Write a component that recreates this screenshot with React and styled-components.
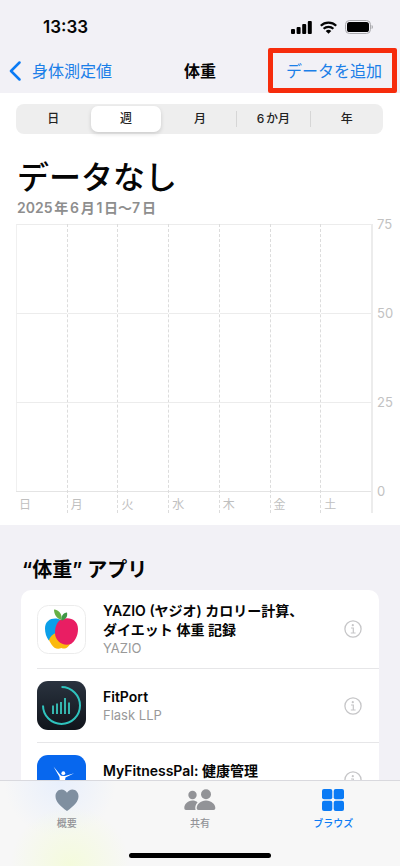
import React, { useState } from 'react'
import styled, { createGlobalStyle } from 'styled-components'

const GlobalStyle = createGlobalStyle`
    * {
        box-sizing: border-box;
    }
    body {
        margin: 0;
        background: #f2f1f6;
        color: #050505;
        font-family: Inter, 'Noto Sans CJK JP', sans-serif;
    }
    button {
        font-family: inherit;
        background: none;
        border: 0;
        padding: 0;
        cursor: pointer;
    }
    svg {
        display: block;
    }
`

const Screen = styled.div`
    height: 100vh;
    display: flex;
    flex-direction: column;
`

const StatusBar = styled.div`
    flex: none;
    height: 48px;
    display: flex;
    justify-content: space-between;
    align-items: center;
    padding: 6px 27px 0 43px;
`

const Clock = styled.time`
    font-size: 17px;
    font-weight: 600;
    line-height: 20px;
`

const StatusIcons = styled.div`
    display: flex;
    align-items: center;
    gap: 8px;
`

const NavBar = styled.header`
    flex: none;
    height: 45px;
    display: grid;
    grid-template-columns: 1fr auto 1fr;
    align-items: center;
    padding: 0 3px;
`

const BackLink = styled.a`
    display: flex;
    align-items: center;
    gap: 9px;
    padding-left: 5px;
    color: #1b7fe8;
    font-size: 16px;
    line-height: 20px;
    text-decoration: none;
`

const NavTitle = styled.h1`
    margin: 0;
    font-size: 16px;
    font-weight: 700;
    line-height: 20px;
`

const AddButton = styled.button`
    && {
        justify-self: end;
        height: 45px;
        padding: 0 10px 0 13px;
        border: 5px solid #f62c0c;
        border-radius: 2px;
    }
    color: #1b7fe8;
    font-size: 16px;
    line-height: 20px;
    white-space: nowrap;
`

const Content = styled.main`
    flex: 1;
    min-height: 0;
    overflow-y: auto;
    scrollbar-width: none;
`

const Panel = styled.section`
    background: #fff;
    padding: 11px 0 12px 16px;
`

const Segments = styled.div`
    height: 30px;
    margin-right: 17px;
    padding: 2px 0;
    display: grid;
    grid-template-columns: repeat(5, 1fr);
    background: #eee;
    border-radius: 8px;
`

const Segment = styled.button`
    && {
        border-left: 1px solid ${({ $divided }) => ($divided ? '#d6d6d6' : 'transparent')};
        margin: 5px 0;
    }
    color: #222;
    font-size: 12px;
    font-weight: 500;
    line-height: 16px;
    text-autospace: normal;
    &&[aria-pressed='true'] {
        margin: 0 2px;
        border: 0;
        background: #fff;
        border-radius: 7px;
        box-shadow: 0 2px 4px rgba(0, 0, 0, 0.14);
    }
`

const Summary = styled.div`
    padding: 24px 0 6px 1px;
`

const Headline = styled.h2`
    margin: 0;
    font-size: 32px;
    font-weight: 500;
    line-height: 40px;
`

const Period = styled.p`
    margin: 0;
    color: #8e8e8e;
    font-size: 14px;
    font-weight: 600;
    line-height: 20px;
    text-autospace: normal;
`

const Chart = styled.div`
    display: flex;
`

const Plot = styled.div`
    flex: 1;
    display: grid;
    grid-template-columns: repeat(7, 1fr);
    border-right: 2px solid #ececec;
`

const Band = styled.div`
    height: 89px;
    border-top: 1px solid #ececec;
`

const Day = styled.div`
    border-left: 1px dashed #dcdcdc;
    &:first-child {
        border-left: 0;
    }
    &:first-child ${Band} {
        border-left: 1px solid #f0f0f0;
    }
`

const DayLabel = styled.div`
    border-top: 1px solid #e4e4e4;
    padding: 5px 0 0 3px;
    color: #bfbfbf;
    font-size: 12px;
    line-height: 16px;
`

const Axis = styled.div`
    width: 27px;
    margin-top: -8px;
    padding-left: 4px;
`

const AxisLabel = styled.div`
    height: 89px;
    color: #c2c2c2;
    font-size: 13px;
    line-height: 16px;
    &:last-child {
        height: 16px;
    }
`

const AppsSection = styled.section`
    padding: 32px 21px 0;
`

const SectionTitle = styled.h2`
    margin: 0 0 7px 1px;
    font-size: 20px;
    font-weight: 600;
    line-height: 26px;
`

const AppList = styled.ul`
    list-style: none;
    margin: 0;
    padding: 0 0 0 16px;
    background: #fff;
    border-radius: 10px;
`

const AppRow = styled.li`
    min-height: 74px;
    display: flex;
    align-items: center;
    gap: 17px;
    padding: 11px 17px 11px 0;
    & + & {
        border-top: 1px solid #e6e6e8;
    }
`

const AppText = styled.div`
    flex: 1;
    min-height: 37px;
`

const AppName = styled.div`
    font-size: 14px;
    font-weight: 600;
    line-height: 19px;
    white-space: pre-line;
`

const Vendor = styled.div`
    color: #999;
    font-size: 13px;
    line-height: 18px;
`

const TabBar = styled.nav`
    flex: none;
    border-top: 1px solid #d9d9de;
    background:
        radial-gradient(circle at 70px 85px, #f4fbdc, transparent 60px),
        radial-gradient(circle at 60px 0, #e8effc, transparent 56px),
        #f7f7f7;
`

const Tabs = styled.div`
    display: grid;
    grid-template-columns: repeat(3, 1fr);
    height: 72px;
    padding-top: 7px;
`

const Tab = styled.button`
    display: flex;
    flex-direction: column;
    align-items: center;
    gap: 4px;
    height: 46px;
    color: ${({ $active }) => ($active ? '#0b7bf5' : '#929397')};
    font-size: 10px;
    font-weight: 500;
    line-height: 14px;
`

const HomeIndicator = styled.div`
    width: 142px;
    height: 5px;
    margin: 0 auto 8px;
    border-radius: 3px;
    background: #000;
`

const SignalIcon = () => (
    <svg width="21" height="13" viewBox="0 0 21 13">
        <rect x="0" y="8" width="4" height="5" rx="1" />
        <rect x="5.6" y="6" width="4" height="7" rx="1" />
        <rect x="11.2" y="3" width="4" height="10" rx="1" />
        <rect x="16.8" y="0" width="4" height="13" rx="1" />
    </svg>
)

const WifiIcon = () => (
    <svg width="17" height="13" viewBox="0 0 17 13">
        <g fill="none" stroke="#050505" strokeWidth="2.2">
            <path d="M.8 4.8a11 11 0 0 1 15.4 0" />
            <path d="M3.6 7.8a7 7 0 0 1 9.8 0" />
        </g>
        <path d="M8.5 12.8 5.7 10a4 4 0 0 1 5.6 0z" />
    </svg>
)

const BatteryIcon = () => (
    <svg width="28" height="14" viewBox="0 0 28 14">
        <rect x=".5" y=".5" width="25" height="13" rx="4" fill="none" stroke="#a9a9ad" />
        <rect x="2" y="2" width="22" height="10" rx="2.6" />
        <path d="M26.6 5v4c.9-.3 1.3-1 1.3-2s-.4-1.7-1.3-2z" fill="#a9a9ad" />
    </svg>
)

const BackIcon = () => (
    <svg width="15" height="20" viewBox="0 0 15 20">
        <path
            d="M11.5 1.5 3 10l8.5 8.5"
            fill="none"
            stroke="#0b7bf5"
            strokeWidth="2.5"
            strokeLinecap="round"
            strokeLinejoin="round"
        />
    </svg>
)

const InfoIcon = () => (
    <svg width="18" height="18" viewBox="0 0 18 18">
        <circle cx="9" cy="9" r="8.1" fill="none" stroke="#c6c6c8" strokeWidth="1.3" />
        <circle cx="8.8" cy="5.2" r="1.1" fill="#c6c6c8" />
        <path d="M7 8h2.3v4.8M6.8 13h4.8" fill="none" stroke="#c6c6c8" strokeWidth="1.2" />
    </svg>
)

const YazioLogo = () => (
    <svg width="49" height="49" viewBox="0 0 49 49">
        <rect x=".5" y=".5" width="48" height="48" rx="11" fill="#fff" stroke="#ececec" />
        <path
            d="M11.5 34 18 25l16 12c-2.5 6-6 7.5-9.5 6-4 1.5-7.5.5-10-3.5-1.2-1.7-2.2-3.5-3-5.5z"
            fill="#fbb90f"
        />
        <path
            d="M24.5 15C18 11.5 8 13.5 8 23.5c0 4.5 1.3 8.5 3.8 12C13 31.5 16 29 20 27.5z"
            fill="#0c9fe8"
        />
        <path
            d="M18 28c0-7 2.5-12.5 7.5-14C33 11.5 41 15 41 24c0 7-3 12-7 15-8 3-16-3-16-11z"
            fill="#e91e63"
        />
        <path d="M24.5 15C19.5 13.5 17 9.5 17 4.5c5 .5 8.5 4.5 7.5 10.5z" fill="#67b044" />
        <path d="M24.5 15.5c-.5-4.500 1.500-7.500 5.500-8 1 4-1.500 7.500-5.500 8z" fill="#3f9747" />
    </svg>
)

const FitPortLogo = () => (
    <svg width="49" height="49" viewBox="0 0 49 49">
        <defs>
            <linearGradient id="fitport" x1="0" y1="0" x2="0" y2="1">
                <stop offset="0" stopColor="#2a333f" />
                <stop offset="1" stopColor="#10141b" />
            </linearGradient>
        </defs>
        <rect width="49" height="49" rx="11" fill="url(#fitport)" />
        <path
            d="M24.5 6A18.5 18.5 0 1 1 6 24.5"
            fill="none"
            stroke="#2fc3bd"
            strokeWidth="2"
        />
        <path
            d="M16 24.5V33M20 22.5V33M24 21v12M28 17v16M32 21.5V33"
            fill="none"
            stroke="#35b5ae"
            strokeWidth="2"
        />
    </svg>
)

const MyFitnessPalLogo = () => (
    <svg width="49" height="49" viewBox="0 0 49 49">
        <rect width="49" height="49" rx="11" fill="#0767ee" />
        <circle cx="26.3" cy="18.2" r="1.9" fill="#fff" />
        <path
            d="M16.5 11.5 24 20.7l4 .2 9.2-2.7-8.700 4.300-1 5.500 3.500 14-5.500-11-6 11 3.300-15-.3-5z"
            fill="#fff"
        />
    </svg>
)

const HeartIcon = () => (
    <svg width="24" height="24" viewBox="0 0 24 24">
        <path
            d="M12 23C5 18 .5 13.5.5 8.2.5 4.4 3.2 1.5 6.6 1.5c2.3 0 4.3 1.3 5.4 3.3 1.1-2 3.1-3.3 5.4-3.3 3.4 0 6.1 2.9 6.1 6.7C23.5 13.5 19 18 12 23z"
            fill="#7f8fa0"
        />
    </svg>
)

const PeopleIcon = () => (
    <svg width="32" height="24" viewBox="0 0 32 24" fill="#929397">
        <circle cx="8.5" cy="7" r="4.2" />
        <path d="M13.6 14.2C12.2 13.1 10.5 12.6 8.5 12.6 3.5 12.6.3 16.5.3 20c0 1.3.6 2 1.7 2h9.6c-1-2.5 0-5.5 2-7.8z" />
        <circle cx="22" cy="6.3" r="5" />
        <path d="M22 12.5c-5.5 0-9.3 4-9.3 7.5 0 1.3.6 2 1.8 2h15c1.2 0 1.8-.7 1.8-2 0-3.5-3.8-7.5-9.3-7.5z" />
    </svg>
)

const BrowseIcon = () => (
    <svg width="24" height="24" viewBox="0 0 24 24" fill="#0b7bf5">
        <rect x="1" y="1" width="10.3" height="10.3" rx="2" />
        <rect x="12.7" y="1" width="10.3" height="10.3" rx="2" />
        <rect x="1" y="12.7" width="10.3" height="10.3" rx="2" />
        <rect x="12.7" y="12.7" width="10.3" height="10.3" rx="2" />
    </svg>
)

const ranges = ['日', '週', '月', '6か月', '年']
const days = ['日', '月', '火', '水', '木', '金', '土']
const ticks = [75, 50, 25, 0]

const apps = [
    {
        name: 'YAZIO (ヤジオ) カロリー計算、\nダイエット 体重 記録',
        vendor: 'YAZIO',
        Logo: YazioLogo,
    },
    { name: 'FitPort', vendor: 'Flask LLP', Logo: FitPortLogo },
    { name: 'MyFitnessPal: 健康管理', Logo: MyFitnessPalLogo },
]

const tabs = [
    { label: '概要', Icon: HeartIcon },
    { label: '共有', Icon: PeopleIcon },
    { label: 'ブラウズ', Icon: BrowseIcon, active: true },
]

const WeightChart = () => (
    <Chart>
        <Plot>
            {days.map((day) => (
                <Day key={day}>
                    <Band />
                    <Band />
                    <Band />
                    <DayLabel>{day}</DayLabel>
                </Day>
            ))}
        </Plot>
        <Axis>
            {ticks.map((tick) => (
                <AxisLabel key={tick}>{tick}</AxisLabel>
            ))}
        </Axis>
    </Chart>
)

const App = () => {
    const [range, setRange] = useState(1)

    return (
        <Screen lang="ja">
            <GlobalStyle />
            <StatusBar>
                <Clock>13:33</Clock>
                <StatusIcons>
                    <SignalIcon />
                    <WifiIcon />
                    <BatteryIcon />
                </StatusIcons>
            </StatusBar>
            <NavBar>
                <BackLink href="#measurements">
                    <BackIcon />
                    身体測定値
                </BackLink>
                <NavTitle>体重</NavTitle>
                <AddButton type="button">データを追加</AddButton>
            </NavBar>
            <Content>
                <Panel>
                    <Segments>
                        {ranges.map((label, i) => (
                            <Segment
                                key={label}
                                type="button"
                                aria-pressed={i === range}
                                $divided={i > 0 && i !== range + 1}
                                onClick={() => setRange(i)}
                            >
                                {label}
                            </Segment>
                        ))}
                    </Segments>
                    <Summary>
                        <Headline>データなし</Headline>
                        <Period>2025年6月1日〜7日</Period>
                    </Summary>
                    <WeightChart />
                </Panel>
                <AppsSection>
                    <SectionTitle>“体重” アプリ</SectionTitle>
                    <AppList>
                        {apps.map(({ name, vendor, Logo }) => (
                            <AppRow key={name}>
                                <Logo />
                                <AppText>
                                    <AppName>{name}</AppName>
                                    {vendor && <Vendor>{vendor}</Vendor>}
                                </AppText>
                                <button type="button" aria-label={`${name} の情報`}>
                                    <InfoIcon />
                                </button>
                            </AppRow>
                        ))}
                    </AppList>
                </AppsSection>
            </Content>
            <TabBar>
                <Tabs>
                    {tabs.map(({ label, Icon, active }) => (
                        <Tab key={label} type="button" $active={active}>
                            <Icon />
                            {label}
                        </Tab>
                    ))}
                </Tabs>
                <HomeIndicator />
            </TabBar>
        </Screen>
    )
}

export default App
